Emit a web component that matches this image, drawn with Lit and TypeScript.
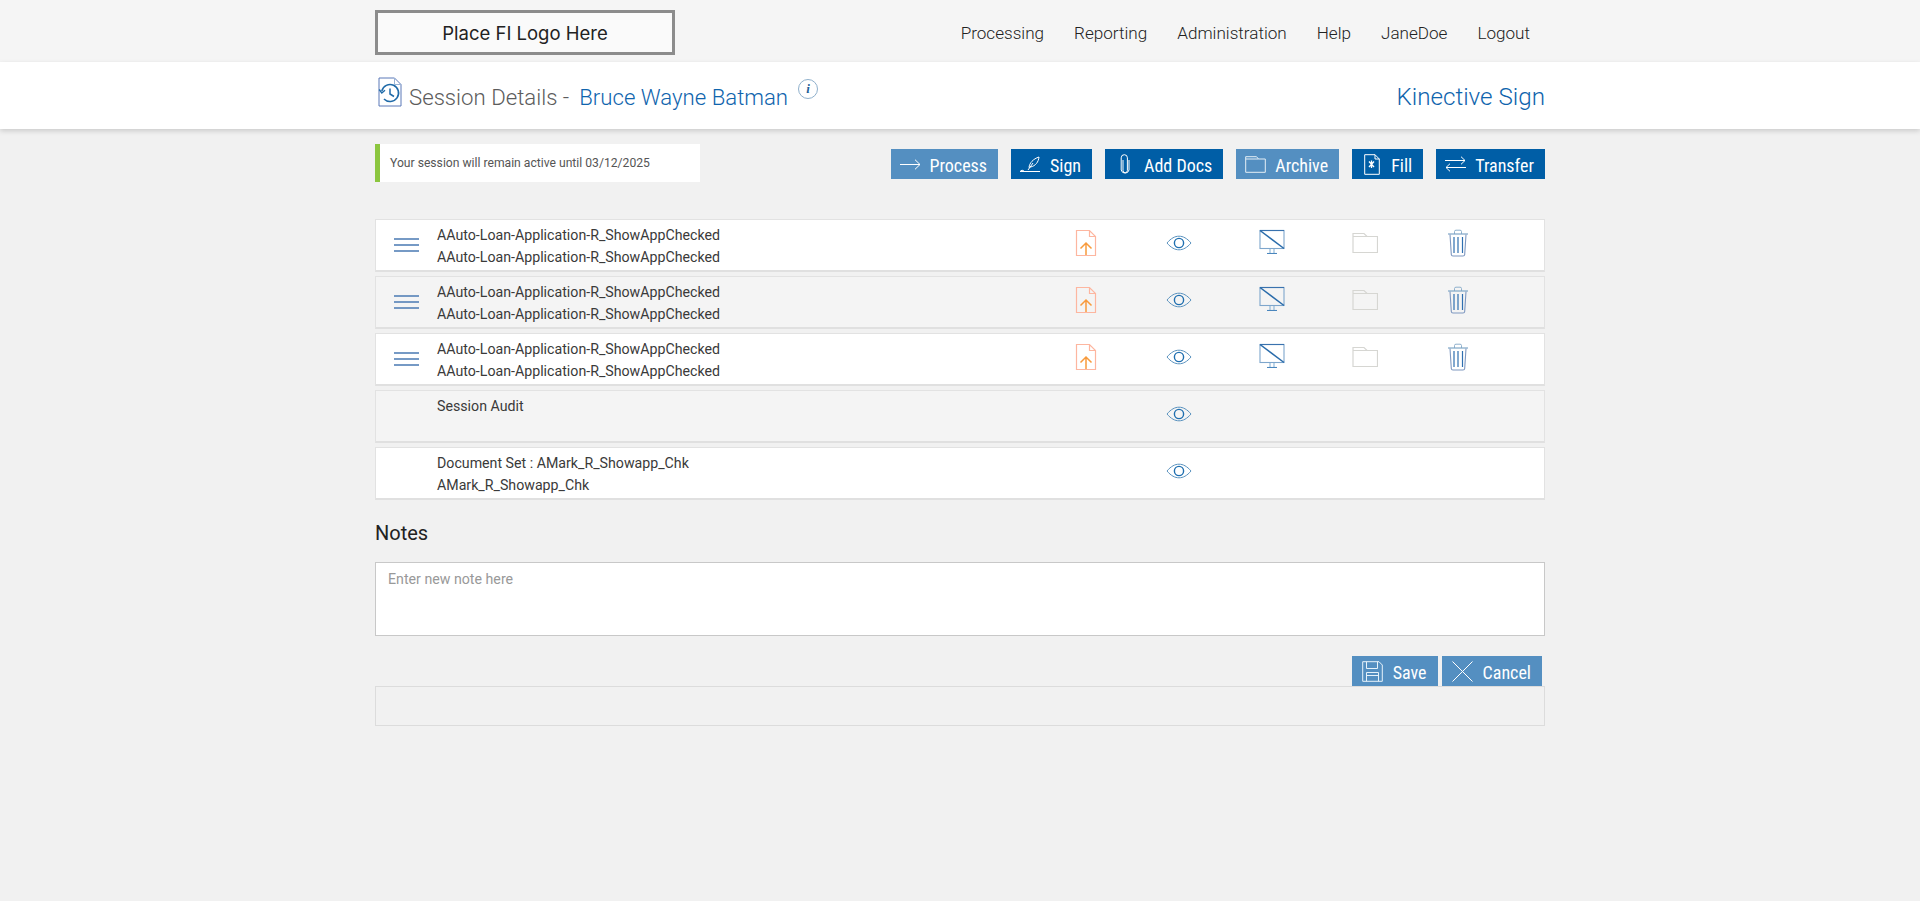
import { LitElement, html, css, svg } from "lit";
import { customElement } from "lit/decorators.js";

const iconUpload = svg`<svg class="ic" width="22" height="28" viewBox="0 0 22 28" fill="none"><path d="M1.5 1.5H14.5L20.5 7.5V26.5H1.5Z M14.5 1.5V7.5H20.5" stroke="#fdb6a0" stroke-width="1.2"/><path d="M11 26V14 M5.5 19.5L11 14L16.5 19.5" stroke="#f89a3c" stroke-width="1.5"/></svg>`;
const iconEye = svg`<svg class="ic" width="26" height="16" viewBox="0 0 26 16" fill="none"><path d="M1 8C5 3.2 9 1.2 13 1.2S21 3.2 25 8C21 12.8 17 14.8 13 14.8S5 12.8 1 8Z" stroke="#5b93bf" stroke-width="1"/><circle cx="13" cy="8" r="4.6" stroke="#1f6fb0" stroke-width="1.4"/></svg>`;
const iconMonitor = svg`<svg class="ic" width="26" height="25" viewBox="0 0 26 25" fill="none"><rect x="1" y="1.5" width="24" height="18" stroke="#7ea6cc" stroke-width="1.1"/><path d="M1 1.5H25" stroke="#3a72ae" stroke-width="1.1"/><path d="M1 1.5L25 19.5" stroke="#2a6cab" stroke-width="1.5"/><path d="M11 20V24 M15 20V24" stroke="#8ab4d6" stroke-width="1.1"/><path d="M8 24.5H18" stroke="#4a86bd" stroke-width="1.1"/></svg>`;
const iconFolder = svg`<svg class="ic" width="26" height="22" viewBox="0 0 26 22" fill="none"><path d="M1 20.5V1.5H12L15 4.5H25.5V20.5Z M1 4.5H15" stroke="#d6d6d2" stroke-width="1.2"/></svg>`;
const iconTrash = svg`<svg class="ic" width="22" height="28" viewBox="0 0 22 28" fill="none"><path d="M7.5 5V2.5Q7.5 1.2 9 1.2H13Q14.5 1.2 14.5 2.5V5" stroke="#8fb0cc" stroke-width="1"/><path d="M1 5H21" stroke="#7fa6c6" stroke-width="1.2"/><path d="M3 5.5L4.3 25.5Q4.4 27 6 27H16Q17.6 27 17.7 25.5L19 5.5" stroke="#7f98c0" stroke-width="1.1"/><path d="M7 8V24 M11 8V24 M15.5 8V24" stroke="#2f6fb0" stroke-width="1.2"/></svg>`;
const iconMenu = svg`<svg class="menu" width="25" height="14" viewBox="0 0 25 14" fill="none"><path d="M0 1H25 M0 7H25 M0 13H25" stroke="#4a79b3" stroke-width="1.3"/></svg>`;
const iconSession = svg`<svg class="session" width="24" height="30" viewBox="0 0 24 30" fill="none"><path d="M1 1H16.5L23 7.5V29H1Z" stroke="#5a78b8" stroke-width="1"/><path d="M16.5 1V7.5H23" stroke="#9ab4d6" stroke-width="1"/><path d="M3.8 14A8.5 8.5 0 1 1 6 22" stroke="#1f6aa8" stroke-width="1.6"/><path d="M1.2 12.5L3.8 16L7 13.2" stroke="#1f6aa8" stroke-width="1.4"/><path d="M12 11.5V17L16 19.5" stroke="#1f6aa8" stroke-width="1.5"/></svg>`;

const btnIcons: Record<string, unknown> = {
  process: svg`<svg width="21" height="11" viewBox="0 0 21 11" fill="none"><path d="M0 5.5H20 M15 .7L20 5.5L15 10.3" stroke="#fff" stroke-width="1"/></svg>`,
  sign: svg`<svg width="21" height="17" viewBox="0 0 21 17" fill="none"><path d="M9 11.5C9.5 7 13 3 19 1C18.5 6 15.5 10 10.5 11L9 11.5Z M8 14L13 7" stroke="#fff" stroke-width="1"/><path d="M0 15.5H20" stroke="#fff" stroke-width="1"/><path d="M0 15.5Q2 13 4 15" stroke="#fff" stroke-width="1"/></svg>`,
  docs: svg`<svg width="10" height="21" viewBox="0 0 10 21" fill="none"><path d="M3 6V16.5A2.2 2.2 0 0 0 7.4 16.5V3.8A2.8 2.8 0 0 0 1.2 3.8V16A4 4 0 0 0 9 16V6" stroke="#fff" stroke-width="1"/></svg>`,
  archive: svg`<svg width="21" height="17" viewBox="0 0 21 17" fill="none"><path d="M.7 16.3V.7H11.5L13.5 3H20.3V16.3Z M.7 3H13.5" stroke="#e4eef6" stroke-width="1"/></svg>`,
  fill: svg`<svg width="16" height="21" viewBox="0 0 16 21" fill="none"><path d="M.7.7H11L15.3 5V20.3H.7Z M11 .7V5H15.3" stroke="#fff" stroke-width="1"/><path d="M5 7.5L10 13 M10 7.5L5 13 M7.5 6.5V14" stroke="#fff" stroke-width="1.3"/></svg>`,
  transfer: svg`<svg width="21" height="16" viewBox="0 0 21 16" fill="none"><path d="M0 4.5H20 M16 .7L20 4.5L16 8.3 M21 11.5H1 M5 7.7L1 11.5L5 15.3" stroke="#fff" stroke-width="1"/></svg>`,
  save: svg`<svg width="21" height="21" viewBox="0 0 21 21" fill="none"><path d="M.7.7H17L20.3 4V20.3H.7Z" stroke="#e6f2fa" stroke-width="1"/><path d="M4.5.7V7.5H15.5V.7 M4.5 20.3V11.5H16.5V20.3 M4.5 14.5H16.5" stroke="#e6f2fa" stroke-width="1"/></svg>`,
  cancel: svg`<svg width="21" height="21" viewBox="0 0 21 21" fill="none"><path d="M.5.5L20.5 20.5 M20.5.5L.5 20.5" stroke="#fff" stroke-width="1"/></svg>`,
};

type Btn = { label: string; icon: string; light?: boolean };
const actions: Btn[] = [
  { label: "Process", icon: "process", light: true },
  { label: "Sign", icon: "sign" },
  { label: "Add Docs", icon: "docs" },
  { label: "Archive", icon: "archive", light: true },
  { label: "Fill", icon: "fill" },
  { label: "Transfer", icon: "transfer" },
];
const nav = ["Processing", "Reporting", "Administration", "Help", "JaneDoe", "Logout"];
const doc = "AAuto-Loan-Application-R_ShowAppChecked";
const rows = [
  { a: doc, b: doc, full: true },
  { a: doc, b: doc, full: true },
  { a: doc, b: doc, full: true },
  { a: "Session Audit", b: "", full: false },
  { a: "Document Set : AMark_R_Showapp_Chk", b: "AMark_R_Showapp_Chk", full: false },
];

@customElement("app-root")
export class AppRoot extends LitElement {
  static styles = css`
    :host { display: block; min-height: 901px; background: #f1f1f1; font-family: Roboto, "Liberation Sans", sans-serif; color: #333; }
    * { box-sizing: border-box; }
    .wrap { width: 1170px; margin: 0 auto; }
    .top { background: #f5f5f5; height: 62px; }
    .top .wrap { display: flex; align-items: flex-start; justify-content: space-between; height: 100%; padding-top: 10px; }
    .logo { width: 300px; height: 45px; border: 3px solid #8c8c8c; background: #fafafa; display: flex; align-items: center; justify-content: center; font: 400 18.5px Inter, sans-serif; color: #222; }
    nav { display: flex; gap: 30px; padding: 13px 15px 0 0; font-weight: 300; font-size: 17.1px; line-height: 20px; color: #222; }
    .sub { background: #fff; height: 67px; box-shadow: 0 2px 5px rgba(0,0,0,.16); }
    .sub .wrap { display: flex; justify-content: space-between; height: 100%; }
    .title { display: flex; align-items: flex-start; font-weight: 300; font-size: 22.2px; line-height: 26px; color: #5c5c5c; padding: 15px 0 0 3px; }
    .session { margin-right: 7px; flex: none; }
    .title span { margin-top: 7px; }
    .title .name { color: #0f64ad; margin-left: 10px; }
    .info { width: 20px; height: 20px; border-radius: 50%; border: 1px solid #8fb0cc; color: #1f5f99; font: italic 700 13px/18px "Liberation Serif", serif; text-align: center; margin: 2px 0 0 10px; }
    .brand { font-weight: 300; font-size: 24.2px; line-height: 28px; color: #0f64ad; padding-top: 21px; }
    .bar { display: flex; justify-content: space-between; align-items: flex-start; padding-top: 15px; height: 90px; }
    .alert { width: 325px; height: 38px; background: #fff; border-left: 5px solid #8cc63f; padding-left: 10px; font-size: 12.15px; line-height: 38px; color: #555; }
    .actions { display: flex; gap: 13px; margin-top: 5px; }
    .btn { height: 30px; display: inline-flex; align-items: center; gap: 9px; padding: 0 11px 0 9px; background: #005ea6; color: #fff; font: 18px Roboto, sans-serif; font-stretch: 87%; white-space: nowrap; border: 0; }
    .btn.light { background: #548fc1; }
    .ico { width: 21px; display: flex; align-items: center; justify-content: center; }
    .btn span { padding-top: 3px; }
    .rows { display: flex; flex-direction: column; gap: 4px; }
    .row { display: grid; grid-template-columns: 61px 1fr repeat(5, 93px) 40px; height: 53px; border: 1px solid #e2e2e2; border-bottom: 2px solid #e0e0e0; background: #fff; }
    .row.alt { background: #f4f4f4; }
    .handle { display: flex; align-items: center; justify-content: center; }
    .text { font-size: 14.2px; line-height: 22px; color: #3a3a3a; padding-top: 4px; }
    .cell { display: flex; align-items: flex-start; justify-content: center; padding-top: 9px; }
    .cell.eye { padding-top: 15px; }
    .cell.folder { padding-top: 12px; }
    h2 { margin: 0; padding: 21px 0 17px; font-weight: 400; font-size: 20px; line-height: 24px; color: #222; }
    .note { display: block; width: 100%; height: 74px; border: 1px solid #c8c8c8; background: #fff; resize: none; padding: 6px 12px; font: 14.2px/20px Roboto, sans-serif; outline: none; }
    .note::placeholder { color: #999; }
    .notes-actions { display: flex; justify-content: flex-end; gap: 4px; padding: 20px 3px 0 0; }
    .notes-actions .btn { background: #548fc1; gap: 10px; padding-left: 10px; }
    .box { height: 40px; border: 1px solid #dcdcdc; background: #f1f1f1; }
  `;

  private btn(b: Btn) {
    return html`<button class="btn ${b.light ? "light" : ""}"><div class="ico">${btnIcons[b.icon]}</div><span>${b.label}</span></button>`;
  }

  render() {
    return html`
      <div class="top"><div class="wrap">
        <div class="logo">Place FI Logo Here</div>
        <nav>${nav.map((n) => html`<div>${n}</div>`)}</nav>
      </div></div>
      <div class="sub"><div class="wrap">
        <div class="title">${iconSession}<span>Session Details -</span><span class="name">Bruce Wayne Batman</span><div class="info">i</div></div>
        <div class="brand">Kinective Sign</div>
      </div></div>
      <div class="wrap">
        <div class="bar">
          <div class="alert">Your session will remain active until 03/12/2025</div>
          <div class="actions">${actions.map((a) => this.btn(a))}</div>
        </div>
        <div class="rows">
          ${rows.map((r, i) => html`
            <div class="row ${i % 2 ? "alt" : ""}">
              <div class="handle">${r.full ? iconMenu : ""}</div>
              <div class="text"><div>${r.a}</div>${r.b ? html`<div>${r.b}</div>` : ""}</div>
              <div class="cell">${r.full ? iconUpload : ""}</div>
              <div class="cell eye">${iconEye}</div>
              <div class="cell">${r.full ? iconMonitor : ""}</div>
              <div class="cell folder">${r.full ? iconFolder : ""}</div>
              <div class="cell">${r.full ? iconTrash : ""}</div>
            </div>`)}
        </div>
        <h2>Notes</h2>
        <textarea class="note" placeholder="Enter new note here"></textarea>
        <div class="notes-actions">
          ${this.btn({ label: "Save", icon: "save" })}
          ${this.btn({ label: "Cancel", icon: "cancel" })}
        </div>
        <div class="box"></div>
      </div>
    `;
  }
}
